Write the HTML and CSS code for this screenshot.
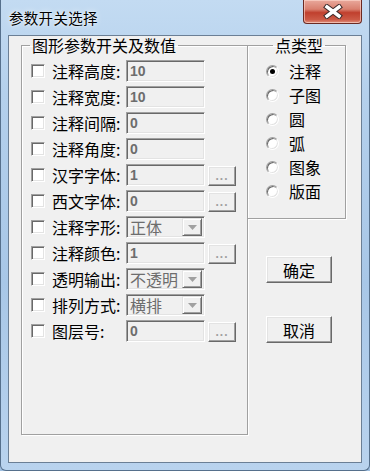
FILE: index.html
```html
<!DOCTYPE html>
<html>
<head>
    <title>参数开关选择</title>
    <link rel="stylesheet" href="styles.css">
</head>
<body>
    <div class="window">
        <div class="titlebar">
            <span class="title">参数开关选择</span>
            <span class="close-btn">
                <svg width="22" height="15" viewBox="0 0 22 15">
                    <path d="M5 3 L17 12 M17 3 L5 12" stroke="#3b2a2a" stroke-width="5.5" stroke-linecap="square"/>
                    <path d="M5 3 L17 12 M17 3 L5 12" stroke="#ffffff" stroke-width="3.5" stroke-linecap="square"/>
                </svg>
            </span>
        </div>
        <div class="client">
            <fieldset class="group params">
                <legend>图形参数开关及数值</legend>
                <div class="row">
                    <input type="checkbox" class="chk">
                    <label class="lbl">注释高度:</label>
                    <input type="text" class="edit" value="10" disabled>
                </div>
                <div class="row">
                    <input type="checkbox" class="chk">
                    <label class="lbl">注释宽度:</label>
                    <input type="text" class="edit" value="10" disabled>
                </div>
                <div class="row">
                    <input type="checkbox" class="chk">
                    <label class="lbl">注释间隔:</label>
                    <input type="text" class="edit" value="0" disabled>
                </div>
                <div class="row">
                    <input type="checkbox" class="chk">
                    <label class="lbl">注释角度:</label>
                    <input type="text" class="edit" value="0" disabled>
                </div>
                <div class="row">
                    <input type="checkbox" class="chk">
                    <label class="lbl">汉字字体:</label>
                    <input type="text" class="edit" value="1" disabled>
                    <button class="more-btn" disabled>...</button>
                </div>
                <div class="row">
                    <input type="checkbox" class="chk">
                    <label class="lbl">西文字体:</label>
                    <input type="text" class="edit" value="0" disabled>
                    <button class="more-btn" disabled>...</button>
                </div>
                <div class="row">
                    <input type="checkbox" class="chk">
                    <label class="lbl">注释字形:</label>
                    <div class="combo">
                        <span class="combo-value">正体</span>
                        <span class="combo-arrow"><svg width="9" height="5" viewBox="0 0 9 5"><path d="M0 0 H9 L4.5 5 Z" fill="#a0a0a0"/></svg></span>
                    </div>
                </div>
                <div class="row">
                    <input type="checkbox" class="chk">
                    <label class="lbl">注释颜色:</label>
                    <input type="text" class="edit" value="1" disabled>
                    <button class="more-btn" disabled>...</button>
                </div>
                <div class="row">
                    <input type="checkbox" class="chk">
                    <label class="lbl">透明输出:</label>
                    <div class="combo">
                        <span class="combo-value">不透明</span>
                        <span class="combo-arrow"><svg width="9" height="5" viewBox="0 0 9 5"><path d="M0 0 H9 L4.5 5 Z" fill="#a0a0a0"/></svg></span>
                    </div>
                </div>
                <div class="row">
                    <input type="checkbox" class="chk">
                    <label class="lbl">排列方式:</label>
                    <div class="combo">
                        <span class="combo-value">横排</span>
                        <span class="combo-arrow"><svg width="9" height="5" viewBox="0 0 9 5"><path d="M0 0 H9 L4.5 5 Z" fill="#a0a0a0"/></svg></span>
                    </div>
                </div>
                <div class="row">
                    <input type="checkbox" class="chk">
                    <label class="lbl">图层号:</label>
                    <input type="text" class="edit" value="0" disabled>
                    <button class="more-btn" disabled>...</button>
                </div>
            </fieldset>
            <div class="side">
                <fieldset class="group types">
                    <legend>点类型</legend>
                    <label class="radio-row"><input type="radio" name="ptype" class="rad" checked>注释</label>
                    <label class="radio-row"><input type="radio" name="ptype" class="rad">子图</label>
                    <label class="radio-row"><input type="radio" name="ptype" class="rad">圆</label>
                    <label class="radio-row"><input type="radio" name="ptype" class="rad">弧</label>
                    <label class="radio-row"><input type="radio" name="ptype" class="rad">图象</label>
                    <label class="radio-row"><input type="radio" name="ptype" class="rad">版面</label>
                </fieldset>
                <button class="btn ok-btn">确定</button>
                <button class="btn cancel-btn">取消</button>
            </div>
        </div>
    </div>
</body>
</html>
```

FILE: styles.css
```css
html, body {
    margin: 0;
    padding: 0;
}
body {
    font-family: "Noto Sans CJK SC", sans-serif;
    font-size: 16px;
    color: #000;
    background: #9fbfe0;
}
.window {
    width: 370px;
    height: 471px;
    box-sizing: border-box;
    border: 1px solid #56708c;
    border-top: none;
    border-radius: 0 0 6px 6px;
    padding: 0 7px 7px 7px;
    background: linear-gradient(to bottom, #c3dbf2 0%, #b4d0ec 20%, #a8c7e7 60%, #b9d3ee 100%);
    display: flex;
    flex-direction: column;
}
.titlebar {
    height: 35px;
    display: flex;
    justify-content: space-between;
    align-items: flex-start;
}
.title {
    margin-top: 10px;
    margin-left: 1px;
    font-size: 14.5px;
    line-height: 16px;
    letter-spacing: 0.3px;
    color: #000;
    text-shadow: 0 0 6px rgba(255,255,255,0.9), 0 0 2px rgba(255,255,255,0.9);
}
.close-btn {
    width: 59px;
    height: 24px;
    box-sizing: border-box;
    border: 1px solid #6b2a22;
    border-top: none;
    border-radius: 0 0 4px 4px;
    background: linear-gradient(to bottom, #e9a99c 0%, #d9806f 40%, #c0402e 55%, #cc5a46 85%, #e0907c 100%);
    box-shadow: inset 0 0 0 1px rgba(255,220,210,0.6);
    display: flex;
    align-items: center;
    justify-content: center;
}
.client {
    flex: 1;
    border: 1px solid #6b7f95;
    background: #f0f0f0;
    display: flex;
    align-items: flex-start;
}
.group {
    margin: 0;
    padding: 0;
    border: 1px solid #a0a0a0;
    box-shadow: inset 1px 1px 0 #fff, 1px 1px 0 #fff;
    box-sizing: border-box;
}
.group legend {
    padding: 0 2px;
    line-height: 16px;
    font-size: 16px;
}
.params {
    margin: 1px 0 0 12px;
    width: 227px;
    height: 398px;
    padding: 7px 0 0 9px;
}
.params legend {
    margin-left: -1px;
}
.row {
    display: flex;
    align-items: center;
    height: 22px;
    margin-bottom: 4px;
}
.chk {
    appearance: none;
    -webkit-appearance: none;
    margin: 0 7px 0 0;
    width: 14px;
    height: 14px;
    box-sizing: border-box;
    background: #fff;
    border: 1px solid;
    border-color: #a0a0a0 #fff #fff #a0a0a0;
    box-shadow: inset 1px 1px 0 #696969, inset -1px -1px 0 #e3e3e3;
}
.lbl {
    width: 74px;
    line-height: 16px;
    white-space: nowrap;
}
.edit, .combo {
    width: 79px;
    height: 22px;
    box-sizing: border-box;
    margin: 0;
    border: 1px solid;
    border-color: #a0a0a0 #fff #fff #a0a0a0;
    box-shadow: inset 1px 1px 0 #696969, inset -1px -1px 0 #e3e3e3;
    background: #f0f0f0;
}
.edit {
    padding: 0 0 0 3px;
    font-family: "Liberation Sans", Arial, sans-serif;
    font-weight: bold;
    font-size: 14px;
    color: #6d6d6d;
    -webkit-text-fill-color: #6d6d6d;
    outline: none;
}
.more-btn {
    margin: 2px 0 0 3px;
    width: 28px;
    height: 20px;
    padding: 0 0 4px 0;
    box-sizing: border-box;
    border: 1px solid;
    border-color: #fff #696969 #696969 #fff;
    box-shadow: inset -1px -1px 0 #a0a0a0, inset 1px 1px 0 #e3e3e3;
    background: #f0f0f0;
    font-family: "Liberation Sans", Arial, sans-serif;
    font-weight: bold;
    font-size: 12px;
    letter-spacing: 1px;
    line-height: 10px;
    color: #a0a0a0;
    display: flex;
    align-items: flex-end;
    justify-content: center;
}
.combo {
    display: flex;
    align-items: center;
    justify-content: space-between;
    padding: 2px 2px 2px 3px;
}
.combo-value {
    color: #6d6d6d;
    line-height: 16px;
    white-space: nowrap;
}
.combo-arrow {
    width: 20px;
    height: 18px;
    box-sizing: border-box;
    border: 1px solid;
    border-color: #e3e3e3 #696969 #696969 #e3e3e3;
    box-shadow: inset 1px 1px 0 #fff, inset -1px -1px 0 #a0a0a0;
    background: #f0f0f0;
    display: flex;
    align-items: center;
    justify-content: center;
}
.side {
    display: flex;
    flex-direction: column;
    align-items: flex-start;
}
.types {
    margin: 1px 0 0 -1px;
    width: 99px;
    height: 182px;
    padding: 6px 0 0 18px;
}
.types legend {
    margin-left: 7px;
}
.radio-row {
    display: flex;
    align-items: center;
    height: 24px;
    line-height: 16px;
}
.rad {
    appearance: none;
    -webkit-appearance: none;
    margin: 0 10px 0 0;
    width: 13px;
    height: 13px;
    box-sizing: border-box;
    border-radius: 50%;
    border: 1px solid;
    border-color: #a0a0a0 #fff #fff #a0a0a0;
    background: #fff;
    box-shadow: inset 1px 1px 0 #696969, inset -1px -1px 0 #e3e3e3;
    position: relative;
}
.rad:checked::after {
    content: "";
    position: absolute;
    left: 3px;
    top: 3px;
    width: 5px;
    height: 5px;
    border-radius: 50%;
    background: #000;
}
.btn {
    width: 66px;
    height: 27px;
    margin-left: 18px;
    padding: 0;
    box-sizing: border-box;
    border: 1px solid;
    border-color: #fff #696969 #696969 #fff;
    box-shadow: inset -1px -1px 0 #a0a0a0, inset 1px 1px 0 #e3e3e3;
    background: #f0f0f0;
    font-family: "Noto Sans CJK SC", sans-serif;
    font-size: 16px;
    line-height: 16px;
    color: #000;
}
.ok-btn {
    margin-top: 37px;
}
.cancel-btn {
    margin-top: 33px;
}
```
